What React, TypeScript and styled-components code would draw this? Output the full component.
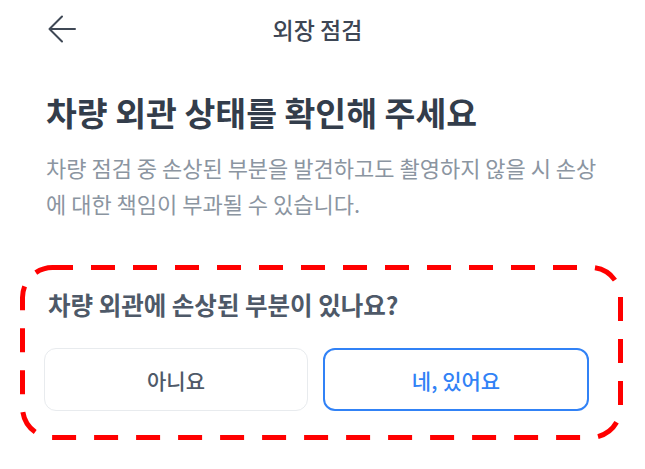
import React from "react";
import styled, { createGlobalStyle } from "styled-components";

const GlobalStyle = createGlobalStyle`
  html, body {
    margin: 0;
    padding: 0;
    background: #ffffff;
  }
  body {
    font-family: "Noto Sans CJK KR", "Noto Sans", sans-serif;
    -webkit-font-smoothing: antialiased;
  }
  * { box-sizing: border-box; }
`;

const Page = styled.div`
  width: 645px;
  height: 469px;
  overflow: hidden;
  display: flex;
  flex-direction: column;
`;

const Header = styled.header`
  height: 58px;
  display: grid;
  grid-template-columns: 1fr auto 1fr;
  align-items: center;
  padding: 0 58px 0 48px;
`;

const BackButton = styled.button`
  justify-self: start;
  width: 28px;
  height: 28px;
  padding: 0;
  border: none;
  background: none;
  display: flex;
  align-items: center;
  justify-content: center;
  color: #3f4855;
`;

const Title = styled.h1`
  margin: 0;
  font-size: 23px;
  line-height: 30px;
  font-weight: 500;
  color: #3d4654;
`;

const Intro = styled.section`
  padding: 0 10px 0 46px;
  display: flex;
  flex-direction: column;
`;

const Heading = styled.h2`
  margin: 33px 0 0;
  font-size: 33.5px;
  line-height: 42px;
  font-weight: 700;
  color: #333d4b;
`;

const Description = styled.p`
  margin: 16px 0 0;
  font-size: 22px;
  line-height: 36px;
  font-weight: 400;
  color: #8b95a1;
  white-space: nowrap;
`;

const Highlight = styled.section`
  position: relative;
  margin: 44px 22px 0 20px;
  height: 175px;
  padding: 25px 34px 0 24px;
  display: flex;
  flex-direction: column;
`;

const DashedFrame = styled.svg`
  position: absolute;
  inset: 0;
  width: 100%;
  height: 100%;
  pointer-events: none;
  overflow: visible;
`;

const Question = styled.h3`
  margin: 0 0 0 4px;
  font-size: 24.5px;
  line-height: 30px;
  font-weight: 700;
  color: #4e5968;
`;

const Choices = styled.div`
  margin-top: 28px;
  display: grid;
  grid-template-columns: 264px 266px;
  gap: 15px;
`;

const Choice = styled.button<{ $selected?: boolean }>`
  height: 63px;
  border-radius: 12px;
  background: #ffffff;
  border: ${(p) => (p.$selected ? "2px solid #3182f6" : "1.5px solid #e8ebee")};
  color: ${(p) => (p.$selected ? "#3182f6" : "#4e5968")};
  font-family: "Noto Sans CJK KR", "Noto Sans", sans-serif;
  font-size: 21px;
  font-weight: 500;
  display: flex;
  align-items: center;
  justify-content: center;
  padding: 0;
`;

const ArrowLeftIcon = () => (
  <svg width="28" height="28" viewBox="0 0 28 28" fill="none">
    <path
      d="M27 14H1.5M14 1.5L1.5 14L14 26.5"
      stroke="currentColor"
      strokeWidth="2"
      strokeLinecap="round"
      strokeLinejoin="round"
    />
  </svg>
);

export default function App() {
  return (
    <>
      <GlobalStyle />
      <Page>
        <Header>
          <BackButton aria-label="뒤로">
            <ArrowLeftIcon />
          </BackButton>
          <Title>외장 점검</Title>
          <span />
        </Header>
        <Intro>
          <Heading>차량 외관 상태를 확인해 주세요</Heading>
          <Description>
            차량 점검 중 손상된 부분을 발견하고도 촬영하지 않을 시 손상
            <br />에 대한 책임이 부과될 수 있습니다.
          </Description>
        </Intro>
        <Highlight>
          <DashedFrame viewBox="0 0 603 175" preserveAspectRatio="none">
            <rect
              x="2.5"
              y="2.5"
              width="598"
              height="170"
              rx="30"
              ry="30"
              fill="none"
              stroke="#ff0000"
              strokeWidth="5"
              strokeDasharray="24 18"
              strokeDashoffset="3.5"
            />
          </DashedFrame>
          <Question>차량 외관에 손상된 부분이 있나요?</Question>
          <Choices>
            <Choice>아니요</Choice>
            <Choice $selected>네, 있어요</Choice>
          </Choices>
        </Highlight>
      </Page>
    </>
  );
}
